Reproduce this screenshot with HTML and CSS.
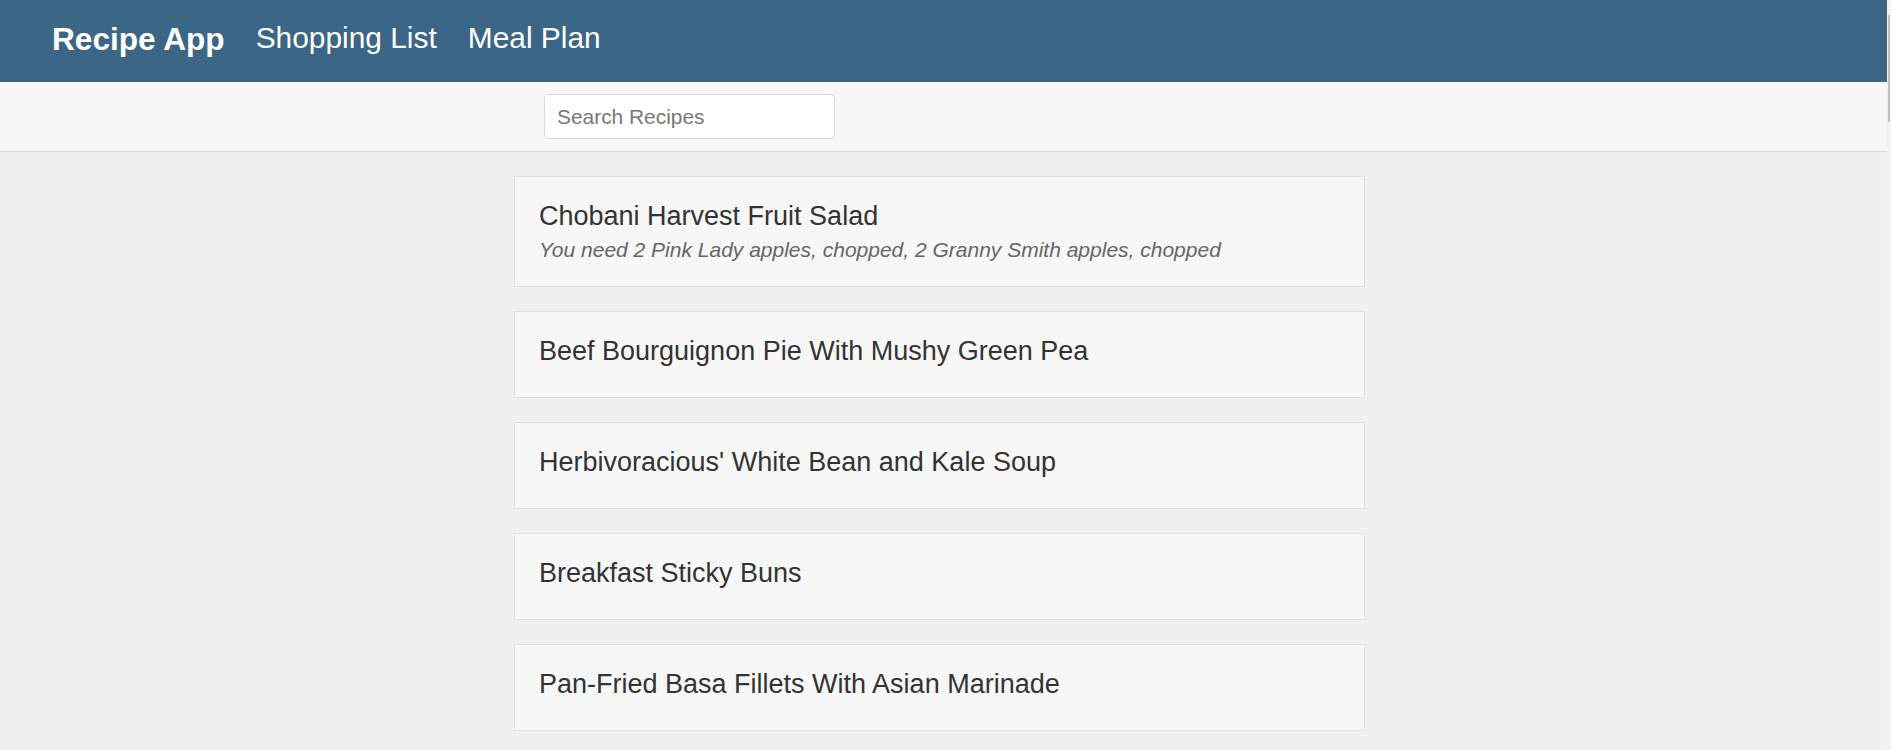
FILE: index.html
```html
<!DOCTYPE html>
<html lang="en">
<head>
<meta charset="utf-8">
<title>Recipe App</title>
<link rel="stylesheet" href="styles.css">
</head>
<body>
<div class="page">
  <header class="topbar">
    <a class="brand" href="#">Recipe App</a>
    <nav class="links">
      <a class="link" href="#">Shopping List</a>
      <a class="link" href="#">Meal Plan</a>
    </nav>
  </header>
  <div class="searchbar">
    <div class="container">
      <input class="search" type="text" placeholder="Search Recipes">
    </div>
  </div>
  <main class="container list">
    <div class="card">
      <h4 class="title">Chobani Harvest Fruit Salad</h4>
      <p class="desc">You need 2 Pink Lady apples, chopped, 2 Granny Smith apples, chopped</p>
    </div>
    <div class="card">
      <h4 class="title">Beef Bourguignon Pie With Mushy Green Pea</h4>
    </div>
    <div class="card">
      <h4 class="title">Herbivoracious' White Bean and Kale Soup</h4>
    </div>
    <div class="card">
      <h4 class="title">Breakfast Sticky Buns</h4>
    </div>
    <div class="card">
      <h4 class="title">Pan-Fried Basa Fillets With Asian Marinade</h4>
    </div>
  </main>
</div>
<div class="scrolltrack"><div class="thumb"></div></div>
</body>
</html>
```
FILE: styles.css
```css
html, body {
  margin: 0;
  padding: 0;
  height: 100%;
  overflow: hidden;
}
body {
  display: flex;
  background: #f0f0f0;
  font-family: "Liberation Sans", Arial, sans-serif;
  color: #333;
}
.page {
  flex: 1;
  min-width: 0;
}
.topbar {
  height: 82px;
  background: #3b6685;
  display: flex;
  align-items: flex-start;
  padding-left: 52px;
  gap: 31px;
  box-sizing: border-box;
}
.brand {
  color: #fff;
  text-decoration: none;
  font-weight: bold;
  font-size: 31.6px;
  line-height: 36px;
  padding-top: 21px;
}
.links {
  display: flex;
  gap: 31px;
}
.link {
  color: #fff;
  text-decoration: none;
  font-size: 29.9px;
  line-height: 34px;
  padding-top: 21px;
}
.searchbar {
  background: #f7f7f7;
  border-bottom: 1px solid #dcdcdc;
  padding: 12px 0 12px;
}
.container {
  width: 851px;
  margin: 0 auto;
  position: relative;
  left: -4px;
}
.searchbar .container {
  padding-left: 30px;
  box-sizing: border-box;
}
.search {
  display: block;
  width: 291px;
  height: 45px;
  box-sizing: border-box;
  border: 1px solid #dadada;
  border-radius: 5px;
  background: #fff;
  padding: 0 12px;
  font-family: "Liberation Sans", Arial, sans-serif;
  font-size: 20.9px;
  color: #555;
  outline: none;
}
.search::placeholder {
  color: #777;
}
.list {
  padding-top: 24px;
}
.card {
  background: #f7f7f7;
  border: 1px solid #dfdfdf;
  border-radius: 1px;
  padding: 24px;
  margin-bottom: 24px;
}
.title {
  margin: 0 0 7px;
  font-size: 27px;
  line-height: 30px;
  font-weight: normal;
  color: #333;
}
.desc {
  margin: 0;
  font-size: 21px;
  line-height: 24px;
  font-style: italic;
  color: #666;
}
.scrolltrack {
  width: 4px;
  flex: none;
  background: #f2f2f2;
  padding-top: 15px;
  box-sizing: border-box;
}
.thumb {
  width: 2px;
  margin-left: 1px;
  height: 107px;
  background: #c2c2c2;
}
```
